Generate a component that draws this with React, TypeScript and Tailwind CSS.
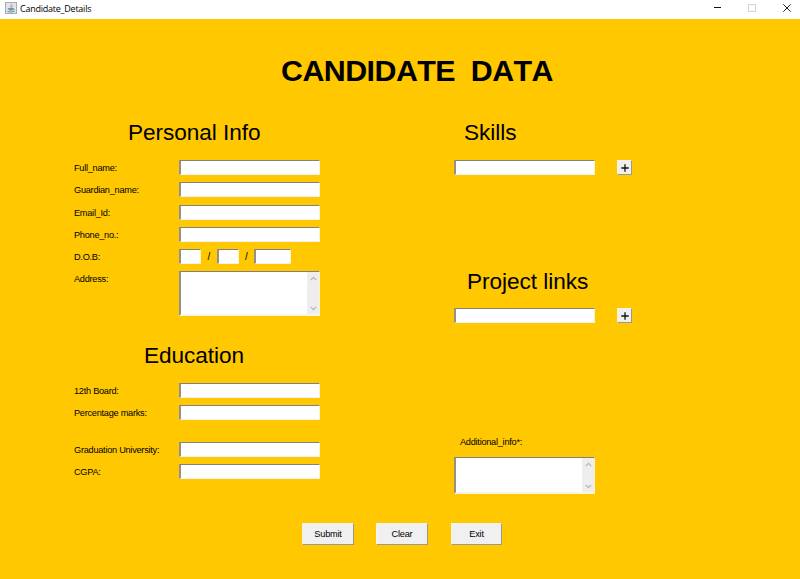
import type { ReactNode } from "react";

function TextBox({ className = "w-[141px]" }: { className?: string }) {
  return (
    <input
      type="text"
      className={`block h-[15px] shrink-0 rounded-none border-t border-l-2 border-r border-b border-t-[#85817a] border-l-[#989183] border-r-[#fff3c4] border-b-[#f1f1f1] bg-white px-0.5 text-[9px] outline-none ${className}`}
    />
  );
}

function Chevron({ down = false }: { down?: boolean }) {
  return (
    <svg width="7" height="5" viewBox="0 0 7 5" fill="none" stroke="#b4b4b4" strokeWidth="1.2">
      <path d={down ? "M0.7 0.8 3.5 3.7 6.3 0.8" : "M0.7 4.2 3.5 1.3 6.3 4.2"} />
    </svg>
  );
}

function TextArea({ className }: { className: string }) {
  return (
    <div
      className={`flex w-[141px] shrink-0 border-t border-l-2 border-r border-b-2 border-t-[#85817a] border-l-[#989183] border-r-[#fff3c4] border-b-[#f8f4e6] bg-white ${className}`}
    >
      <textarea className="min-w-0 flex-1 resize-none overflow-hidden bg-white text-[9px] outline-none" />
      <div className="flex w-3 flex-col items-center justify-between bg-[#eeeeee] pt-1 pb-[3px]">
        <Chevron />
        <Chevron down />
      </div>
    </div>
  );
}

function Row({ label, gap, children }: { label: string; gap: string; children: ReactNode }) {
  return (
    <div className={`flex h-[15px] items-start ${gap}`}>
      <label className="w-[105px] shrink-0 text-[9.2px] leading-[16px] tracking-[-0.26px] whitespace-nowrap">{label}</label>
      {children}
    </div>
  );
}

function Heading({ className, children }: { className: string; children: ReactNode }) {
  return <h2 className={`h-[30px] text-[22.6px] leading-[30px] tracking-[-0.05px] whitespace-nowrap ${className}`}>{children}</h2>;
}

function AddRow({ gap }: { gap: string }) {
  return (
    <div className={`flex ${gap}`}>
      <TextBox className="w-[141px]" />
      <button className="ml-[22px] flex h-[15px] w-[15px] items-center justify-center border border-t-[#f6f3e9] border-r-[#9c9890] border-b-[#9c9890] border-l-[#f6f3e9] bg-[#f0f0f0]">
        <svg width="8" height="8" viewBox="0 0 8 8" stroke="#111" strokeWidth="1.3">
          <path d="M0.3 4H7.7M4 0.3V7.7" />
        </svg>
      </button>
    </div>
  );
}

function ActionButton({ children, className = "w-[52px]" }: { children: ReactNode; className?: string }) {
  return (
    <button
      className={`h-[22px] border border-t-[#f6f3e9] border-r-[#9c9890] border-b-[#9c9890] border-l-[#f6f3e9] bg-[#f0f0f0] text-[9.2px] leading-[20px] tracking-[-0.2px] ${className}`}
    >
      {children}
    </button>
  );
}

function JavaIcon() {
  return (
    <svg width="12" height="12" viewBox="0 0 12 12" fill="none">
      <rect x="0.5" y="0.5" width="11" height="11" fill="#dce5ec" stroke="#a3adb5" />
      <path d="M6.4 1.8C7.6 3 4.6 3.7 5.7 5.6M7.8 3.5C6.4 4.2 6.7 4.8 7 5.7" stroke="#d9774c" strokeWidth="0.8" />
      <path d="M3.2 6.6H8.2C8 8.6 4 8.7 3.2 6.6" fill="#7391a8" stroke="#5d7e99" strokeWidth="0.7" />
      <path d="M8.2 6.8C9.8 6.6 9.2 8 7.8 8M2.4 9.3C4.6 10.2 7.7 10.1 9.5 9.2" stroke="#5d7e99" strokeWidth="0.9" />
    </svg>
  );
}

function TitleBar() {
  return (
    <header className="flex h-[19px] bg-white pt-[2px] pl-[5px] font-['Open_Sans',sans-serif]">
      <JavaIcon />
      <span className="ml-[3px] text-[9px] leading-[13px] tracking-[-0.24px] whitespace-nowrap">Candidate_Details</span>
      <div className="ml-auto flex h-[12px] items-center pr-[9px]">
        <svg width="7" height="8" viewBox="0 0 7 8" stroke="#111">
          <path d="M0 3.5H7" />
        </svg>
        <svg className="ml-[27px]" width="8" height="8" viewBox="0 0 8 8" fill="none" stroke="#d2d2d2">
          <path d="M0.5 0.5H7.5V7.5H0.5Z" />
        </svg>
        <svg className="ml-[27px]" width="8" height="8" viewBox="0 0 8 8" stroke="#222">
          <path d="M0.3 0.3 7.7 7.7M7.7 0.3 0.3 7.7" />
        </svg>
      </div>
    </header>
  );
}

export default function App() {
  return (
    <div className="h-[579px] w-[800px] overflow-hidden bg-[#ffc800] font-['Liberation_Sans',Arial,sans-serif] text-black">
      <TitleBar />
      <h1 className="mt-[31px] ml-[281px] h-[41px] text-[30.4px] leading-10 font-bold tracking-[-0.55px] whitespace-pre [font-kerning:none]">CANDIDATE  DATA</h1>
      <main className="mt-[27px] flex h-[378px] pl-[74px]">
        <section className="w-[380px]">
          <Heading className="ml-[54px]">Personal Info</Heading>
          <Row label="Full_name:" gap="mt-[12px]"><TextBox /></Row>
          <Row label="Guardian_name:" gap="mt-[7px]"><TextBox /></Row>
          <Row label="Email_Id:" gap="mt-[8px]"><TextBox /></Row>
          <Row label="Phone_no.:" gap="mt-[7px]"><TextBox /></Row>
          <Row label="D.O.B:" gap="mt-[7px]">
            <TextBox className="w-[22px]" />
            <span className="w-4 text-center text-[10px] leading-[15px]">/</span>
            <TextBox className="w-[22px]" />
            <span className="w-[15px] text-center text-[10px] leading-[15px]">/</span>
            <TextBox className="w-[37px]" />
          </Row>
          <Row label="Address:" gap="mt-[7px]"><TextArea className="h-[45px]" /></Row>
          <Heading className="mt-[55px] ml-[70px]">Education</Heading>
          <Row label="12th Board:" gap="mt-[12px]"><TextBox /></Row>
          <Row label="Percentage marks:" gap="mt-[7px]"><TextBox /></Row>
          <Row label="Graduation University:" gap="mt-[22px]"><TextBox /></Row>
          <Row label="CGPA:" gap="mt-[7px]"><TextBox /></Row>
        </section>
        <section>
          <Heading className="ml-[10px]">Skills</Heading>
          <AddRow gap="mt-[12px]" />
          <Heading className="mt-[92px] ml-[13px]">Project links</Heading>
          <AddRow gap="mt-[11px]" />
          <p className="mt-[111px] ml-[6px] text-[9.2px] leading-[16px] tracking-[-0.26px]">Additional_info*:</p>
          <TextArea className="mt-[7px] h-[37px]" />
        </section>
      </main>
      <footer className="mt-[27px] flex pl-[302px]">
        <ActionButton>Submit</ActionButton>
        <ActionButton className="ml-[22px] w-[52px]">Clear</ActionButton>
        <ActionButton className="ml-[23px] w-[51px]">Exit</ActionButton>
      </footer>
    </div>
  );
}
